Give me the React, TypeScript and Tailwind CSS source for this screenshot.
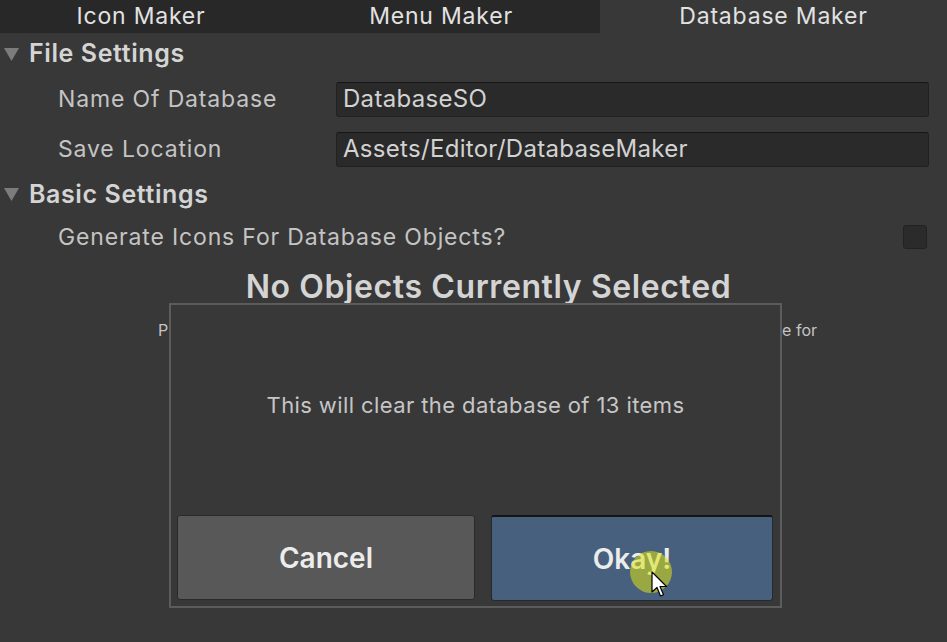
import { type ReactNode } from 'react'

const FONT = { fontFamily: 'Inter, "Noto Sans", sans-serif' }

function Foldout({ title }: { title: string }) {
  return (
    <div className="flex items-center h-full">
      <svg width="15" height="13" viewBox="0 0 15 13" className="ml-[4px] mr-[10px] mt-[1px]">
        <polygon points="0,0 15,0 7.5,13" fill="#7c7c7c" />
      </svg>
      <span className="text-[25px] font-semibold text-[#d4d4d4] leading-none tracking-[0.6px]">{title}</span>
    </div>
  )
}

function Field({ label, children }: { label: string; children: ReactNode }) {
  return (
    <div className="flex items-center h-full">
      <span className="w-[278px] pl-[58px] text-[23px] text-[#c4c4c4] tracking-[0.85px] shrink-0">{label}</span>
      {children}
    </div>
  )
}

function TextInput({ value }: { value: string }) {
  return (
    <div className="ml-[58px] w-[593px] h-[35px] flex items-center px-[6px] bg-[#2a2a2a] border border-[#212121] border-t-[#161616] rounded-[3px] text-[24px] tracking-[0.3px] text-[#d2d2d2]">
      {value}
    </div>
  )
}

export default function App() {
  const tabs = [
    { name: 'Icon Maker', w: 'w-[282px]', active: false },
    { name: 'Menu Maker', w: 'w-[318px]', active: false },
    { name: 'Database Maker', w: 'flex-1', active: true },
  ]

  return (
    <div className="relative w-[947px] h-[642px] overflow-hidden bg-[#383838]" style={FONT}>
      {/* tab strip */}
      <div className="flex h-[33px]">
        {tabs.map((t) => (
          <div
            key={t.name}
            className={`${t.w} flex items-center justify-center text-[23px] tracking-[0.8px] text-[#e2e2e2] ${
              t.active ? 'bg-[#383838]' : 'bg-[#282828]'
            }`}
          >
            {t.name}
          </div>
        ))}
      </div>

      <div className="h-[41px]">
        <Foldout title="File Settings" />
      </div>
      <div className="h-[50px]">
        <Field label="Name Of Database">
          <TextInput value="DatabaseSO" />
        </Field>
      </div>
      <div className="h-[50px]">
        <Field label="Save Location">
          <TextInput value="Assets/Editor/DatabaseMaker" />
        </Field>
      </div>
      <div className="h-[40px]">
        <Foldout title="Basic Settings" />
      </div>
      <div className="h-[46px] flex items-center">
        <span className="pl-[58px] text-[23px] text-[#c4c4c4] tracking-[0.85px]">Generate Icons For Database Objects?</span>
        <div className="ml-auto mr-[20px] w-[24px] h-[24px] bg-[#2b2b2b] border border-[#222] rounded-[3px]" />
      </div>
      <div className="h-[54px] flex items-center justify-center">
        <span className="text-[32px] font-semibold text-[#d4d4d4] tracking-[0.6px] ml-[30px]">No Objects Currently Selected</span>
      </div>
      {/* hint text, mostly covered by the dialog */}
      <div className="h-[32px] flex items-center">
        <div className="ml-[158px] w-[659px] flex justify-between text-[16px] text-[#c4c4c4] whitespace-nowrap overflow-hidden">
          <span>Please select objects in the project window</span>
          <span>you would like to create a database for</span>
        </div>
      </div>

      {/* confirmation modal */}
      <div className="absolute left-[169px] top-[303px] w-[613px] h-[305px] bg-[#383838] border-2 border-[#5c5c5c] flex flex-col">
        <div className="flex-1 flex items-center justify-center pb-[10px]">
          <span className="text-[22px] text-[#c6c6c6] tracking-[0.4px]">This will clear the database of 13 items</span>
        </div>
        <div className="flex gap-[16px] px-[6px] pb-[5px]">
          <button className="w-[298px] h-[85px] bg-[#585858] border border-[#2a2a2a] rounded-[3px] text-[28px] font-semibold text-[#ececec]">
            Cancel
          </button>
          <button className="w-[282px] h-[86px] bg-[#46607d] border border-[#262a30] border-t-2 border-t-[#151515] rounded-[3px] text-[28px] font-semibold text-[#ececec]">
            Okay!
          </button>
        </div>
      </div>

      {/* click highlight + cursor */}
      <div className="absolute left-[630px] top-[551px] w-[42px] h-[42px] rounded-full bg-[rgba(223,227,18,0.55)]" />
      <svg className="absolute left-[651px] top-[571px]" width="18" height="28" viewBox="0 0 18 28">
        <path d="M1 1 L1 21 L6 16.5 L9.5 25 L12.5 23.7 L9 15.5 L15.5 15.5 Z" fill="#fff" stroke="#000" strokeWidth="1.2" strokeLinejoin="round" />
      </svg>
    </div>
  )
}
